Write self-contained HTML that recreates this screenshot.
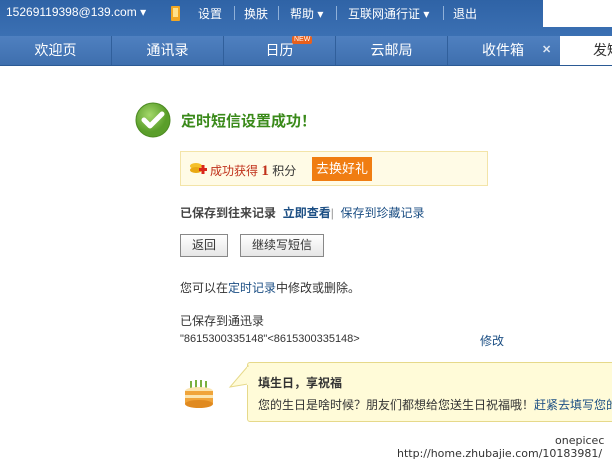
<!DOCTYPE html>
<html><head><meta charset="utf-8"><style>
*{margin:0;padding:0;box-sizing:border-box}
body{width:612px;height:462px;overflow:hidden;background:#fff;font-family:"Liberation Sans","Noto Sans CJK SC",sans-serif;font-size:12px;color:#333;position:relative}
.top{position:absolute;left:0;top:0;width:612px;height:36px;background:linear-gradient(#2f63a6,#3b70b3);color:#fff;font-size:12px}
.top span{position:absolute;top:5px;white-space:nowrap}
.sep{position:absolute;top:6px;width:1px;height:14px;background:#8fb0d8}
.box{position:absolute;left:543px;top:0;width:69px;height:27px;background:#fff}
.tabs{position:absolute;left:0;top:36px;width:612px;height:30px;background:linear-gradient(#4f80c0,#3e6fae);border-bottom:1px solid #2b5a95}
.tab{position:absolute;top:0;height:29px;line-height:29px;color:#fff;font-size:14px;text-align:center;border-right:1px solid #305f9b;white-space:nowrap}
.abs{position:absolute;white-space:nowrap}
</style></head><body>
<div class="top">
<span style="left:6px">15269119398@139.com ▾</span>
<svg style="position:absolute;left:171px;top:6px" width="9" height="15"><rect x="0" y="0" width="9" height="15" rx="1" fill="#f2a723"/><rect x="2" y="2" width="5" height="9" fill="#ffe08a"/></svg>
<span style="left:198px">设置</span><div class="sep" style="left:234px"></div>
<span style="left:244px">换肤</span><div class="sep" style="left:278px"></div>
<span style="left:290px">帮助 ▾</span><div class="sep" style="left:336px"></div>
<span style="left:348px">互联网通行证 ▾</span><div class="sep" style="left:443px"></div>
<span style="left:453px">退出</span>
<div class="box"></div>
</div>
<div class="tabs">
<div class="tab" style="left:0;width:112px">欢迎页</div>
<div class="tab" style="left:112px;width:112px">通讯录</div>
<div class="tab" style="left:224px;width:112px">日历</div>
<div class="abs" style="left:292px;top:0px;background:#e8601c;color:#fff;font-size:7px;line-height:8px;padding:0 2px;border-radius:2px">NEW</div>
<div class="tab" style="left:336px;width:112px">云邮局</div>
<div class="tab" style="left:448px;width:112px;border:0"><span style="position:absolute;left:34px">收件箱</span><span style="position:absolute;left:94px;font-size:11px;font-weight:bold;color:#dde6f2">✕</span></div>
<div class="tab" style="left:560px;width:52px;background:#fff;color:#333;border:0;text-align:left;padding-left:33px">发短信</div>
</div>

<svg class="abs" style="left:135px;top:102px" width="36" height="36"><defs><radialGradient id="g" cx="40%" cy="35%"><stop offset="0" stop-color="#a4d86a"/><stop offset="1" stop-color="#5a9e2a"/></radialGradient></defs><circle cx="18" cy="18" r="17" fill="url(#g)" stroke="#4c8a22"/><path d="M9 18 L15 24 L27 12" stroke="#fff" stroke-width="5" fill="none" stroke-linecap="round" stroke-linejoin="round"/></svg>
<div class="abs" style="left:181px;top:110px;font-size:15px;font-weight:bold;color:#3a8a1a">定时短信设置成功！</div>

<div class="abs" style="left:180px;top:151px;width:308px;height:35px;background:#fffbe6;border:1px solid #f3e4a8"></div>
<svg class="abs" style="left:189px;top:161px" width="18" height="16"><ellipse cx="7" cy="5" rx="6" ry="3" fill="#f5c02a"/><ellipse cx="7" cy="9" rx="6" ry="3" fill="#e9a812"/><rect x="10" y="7" width="8" height="3" fill="#d9261c"/><rect x="12.5" y="4" width="3" height="9" fill="#d9261c"/></svg>
<div class="abs" style="left:210px;top:162px;color:#c0301a">成功获得 <b style="font-size:15px;font-family:'Liberation Serif',serif">1</b> <span style="color:#333">积分</span></div>
<div class="abs" style="left:312px;top:157px;width:60px;height:24px;background:#f07d12;color:#fff;font-size:13px;line-height:24px;text-align:center">去换好礼</div>

<div class="abs" style="left:180px;top:204px"><b style="color:#444">已保存到往来记录</b> &nbsp;<b style="color:#1c4f84">立即查看</b><span style="color:#999">|</span> &nbsp;<span style="color:#1c4f84">保存到珍藏记录</span></div>

<div class="abs" style="left:180px;top:234px;width:48px;height:23px;border:1px solid #888;background:linear-gradient(#fff,#e6e6e6);text-align:center;line-height:21px">返回</div>
<div class="abs" style="left:240px;top:234px;width:84px;height:23px;border:1px solid #888;background:linear-gradient(#fff,#e6e6e6);text-align:center;line-height:21px">继续写短信</div>

<div class="abs" style="left:180px;top:279px">您可以在<span style="color:#1c4f84">定时记录</span>中修改或删除。</div>
<div class="abs" style="left:180px;top:312px">已保存到通迅录</div>
<div class="abs" style="left:180px;top:333px;font-size:11px">"8615300335148"&lt;8615300335148&gt;</div>
<div class="abs" style="left:480px;top:332px;color:#1c4f84">修改</div>

<div class="abs" style="left:247px;top:362px;width:370px;height:60px;background:#fffbd8;border:1px solid #e6d98a;border-radius:3px"></div>
<svg class="abs" style="left:226px;top:362px" width="24" height="30"><path d="M22 4 L4 25 L22 22 Z" fill="#fffbd8" stroke="#e6d98a"/><rect x="21" y="5" width="4" height="18" fill="#fffbd8"/></svg>
<svg class="abs" style="left:183px;top:375px" width="32" height="34"><path d="M8 6v8M13 5v9M18 5v9M23 6v8" stroke="#7ab040" stroke-width="2"/><ellipse cx="16" cy="16" rx="14" ry="4" fill="#fbe5b0"/><rect x="2" y="16" width="28" height="13" fill="#f0a43a"/><rect x="2" y="20" width="28" height="3" fill="#fbe5b0"/><ellipse cx="16" cy="29" rx="14" ry="4" fill="#e08a20"/></svg>
<div class="abs" style="left:258px;top:374px;font-weight:bold;color:#333;font-size:12px">填生日，享祝福</div>
<div class="abs" style="left:258px;top:396px">您的生日是啥时候？朋友们都想给您送生日祝福哦！<span style="color:#1c4f84">赶紧去填写您的生日</span></div>

<div class="abs" style="left:555px;top:434px;font-size:11px;color:#333;font-family:'DejaVu Sans',sans-serif">onepicec</div>
<div class="abs" style="left:397px;top:447px;font-size:11px;color:#333;font-family:'DejaVu Sans',sans-serif">http://home.zhubajie.com/10183981/</div>
</body></html>
